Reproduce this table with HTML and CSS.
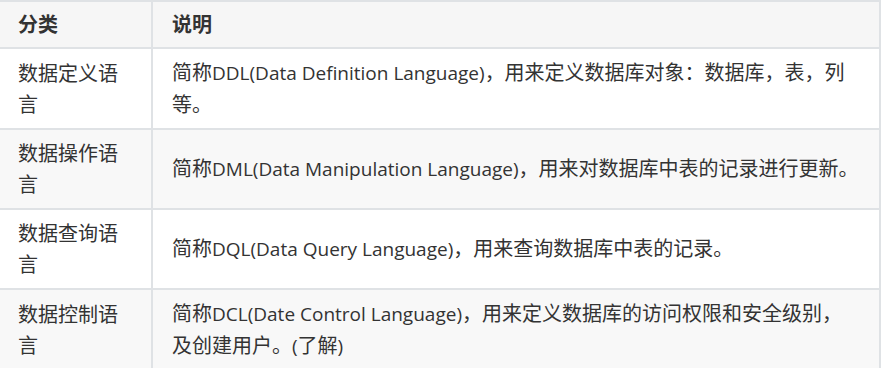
FILE: index.html
```html
<!DOCTYPE html>
<html lang="zh-CN">
<head>
<meta charset="utf-8">
<title>SQL 分类</title>
<link rel="stylesheet" href="styles.css">
</head>
<body>
<table class="sql-table">
  <colgroup>
    <col class="col-type">
    <col class="col-desc">
  </colgroup>
  <thead>
    <tr><th>分类</th><th>说明</th></tr>
  </thead>
  <tbody>
    <tr><td>数据定义语言</td><td>简称<span class="en">DDL(Data Definition Language)</span>，用来定义数据库对象：数据库，表，列等。</td></tr>
    <tr><td>数据操作语言</td><td>简称<span class="en">DML(Data Manipulation Language)</span>，用来对数据库中表的记录进行更新。</td></tr>
    <tr><td>数据查询语言</td><td>简称<span class="en">DQL(Data Query Language)</span>，用来查询数据库中表的记录。</td></tr>
    <tr><td>数据控制语言</td><td>简称<span class="en">DCL(Date Control Language)</span>，用来定义数据库的访问权限和安全级别，<span class="phrase">及创建用户。<span class="en">(</span>了解<span class="en">)</span></span></td></tr>
  </tbody>
</table>
</body>
</html>
```
FILE: styles.css
```css
html, body {
  margin: 0;
  padding: 0;
  background: #ffffff;
}
body {
  font-family: "Open Sans", "Noto Sans CJK SC", sans-serif;
  font-size: 20px;
  color: #333333;
}
.sql-table {
  margin-left: -2px;
  width: 883px;
  table-layout: fixed;
  border-collapse: separate;
  border-spacing: 0;
  border-top: 2px solid #dfe2e5;
  border-left: 2px solid #dfe2e5;
}
.col-type { width: 153px; }
.col-desc { width: 728px; }
.sql-table th,
.sql-table td {
  border-right: 2px solid #dfe2e5;
  border-bottom: 2px solid #dfe2e5;
  padding: 8px 17px 8px 18px;
  line-height: 31px;
  text-align: left;
  vertical-align: middle;
}
.sql-table th {
  padding-top: 7px;
  padding-bottom: 7px;
  background: #f6f6f6;
  font-weight: bold;
}
.sql-table td:last-child,
.sql-table th:last-child {
  padding-left: 19px;
}
.sql-table tbody tr:nth-child(even) td {
  background: #f8f8f8;
}
.en {
  font-size: 19px;
}
.phrase {
  white-space: nowrap;
}
```
